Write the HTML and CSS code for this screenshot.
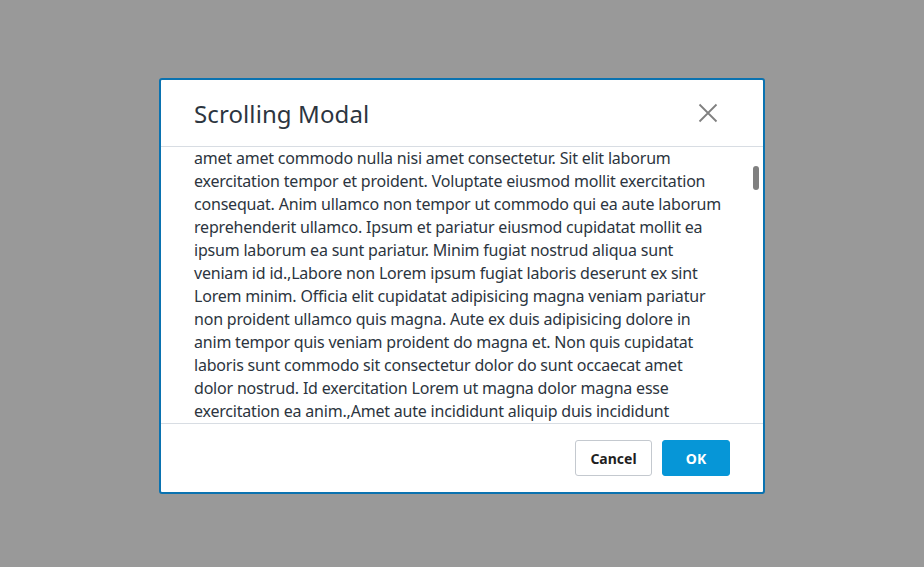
FILE: index.html
```html
<!DOCTYPE html>
<html lang="en">
<head>
<meta charset="utf-8">
<title>Scrolling Modal</title>
<link rel="stylesheet" href="styles.css">
</head>
<body>
<div class="backdrop">
  <div class="modal" role="dialog" aria-labelledby="modal-title">
    <header class="modal-header">
      <h1 id="modal-title" class="modal-title">Scrolling Modal</h1>
      <button class="close-btn" aria-label="Close">
        <svg width="20" height="20" viewBox="0 0 20 20" aria-hidden="true">
          <path d="M1.5 1.5 L18.5 18.5 M18.5 1.5 L1.5 18.5" stroke="#808080" stroke-width="1.8" fill="none"/>
        </svg>
      </button>
    </header>
    <div class="modal-body">
      <p class="body-text">amet amet commodo nulla nisi amet consectetur. Sit elit laborum<br>
exercitation tempor et proident. Voluptate eiusmod mollit exercitation<br>
consequat. Anim ullamco non tempor ut commodo qui ea aute laborum<br>
reprehenderit ullamco. Ipsum et pariatur eiusmod cupidatat mollit ea<br>
ipsum laborum ea sunt pariatur. Minim fugiat nostrud aliqua sunt<br>
veniam id id.,Labore non Lorem ipsum fugiat laboris deserunt ex sint<br>
Lorem minim. Officia elit cupidatat adipisicing magna veniam pariatur<br>
non proident ullamco quis magna. Aute ex duis adipisicing dolore in<br>
anim tempor quis veniam proident do magna et. Non quis cupidatat<br>
laboris sunt commodo sit consectetur dolor do sunt occaecat amet<br>
dolor nostrud. Id exercitation Lorem ut magna dolor magna esse<br>
exercitation ea anim.,Amet aute incididunt aliquip duis incididunt</p>
      <div class="scroll-thumb"></div>
    </div>
    <footer class="modal-footer">
      <button class="btn btn-secondary">Cancel</button>
      <button class="btn btn-primary">OK</button>
    </footer>
  </div>
</div>
</body>
</html>
```
FILE: styles.css
```css
* { box-sizing: border-box; }
html, body { margin: 0; padding: 0; }
body {
  background: #999999;
  font-family: "Noto Sans", "Open Sans", sans-serif;
  color: #2e3440;
}
.backdrop {
  width: 924px;
  height: 567px;
  display: flex;
  justify-content: center;
  align-items: flex-start;
  padding-top: 78px;
}
.modal {
  width: 606px;
  height: 416px;
  background: #fff;
  border: 2px solid #0a72b0;
  border-radius: 3px;
  display: flex;
  flex-direction: column;
}
.modal-header {
  height: 67px;
  flex: none;
  display: flex;
  align-items: center;
  justify-content: space-between;
  padding: 0 45px 0 33px;
  border-bottom: 1px solid #d8dde3;
}
.modal-title {
  margin: 0;
  font-size: 24px;
  font-weight: 400;
  color: #2c3540;
  line-height: 32px;
  letter-spacing: 0.1px;
  padding-top: 1px;
}
.close-btn {
  background: none;
  border: none;
  padding: 0;
  width: 20px;
  height: 20px;
  display: flex;
  cursor: pointer;
}
.modal-body {
  flex: 1;
  position: relative;
  overflow: hidden;
  padding: 0 32px 0 33px;
}
.body-text {
  margin: 0;
  white-space: nowrap;
  font-size: 16px;
  line-height: 23px;
  letter-spacing: -0.2px;
  color: #2c3540;
}
.scroll-thumb {
  position: absolute;
  right: 4px;
  top: 19px;
  width: 6px;
  height: 24px;
  border-radius: 3px;
  background: #808080;
}
.modal-footer {
  flex: none;
  height: 69px;
  border-top: 1px solid #d8dde3;
  display: flex;
  justify-content: flex-end;
  align-items: center;
  gap: 10px;
  padding: 0 33px 0 32px;
}
.btn {
  height: 36px;
  border-radius: 3px;
  font-family: "Noto Sans", "Open Sans", sans-serif;
  font-size: 14px;
  font-weight: 700;
  cursor: pointer;
}
.btn-secondary {
  width: 77px;
  background: #fff;
  border: 1px solid #c4c9cf;
  color: #1f1f1f;
}
.btn-primary {
  width: 68px;
  background: #0696d7;
  border: 1px solid #0696d7;
  color: #fff;
}
```
